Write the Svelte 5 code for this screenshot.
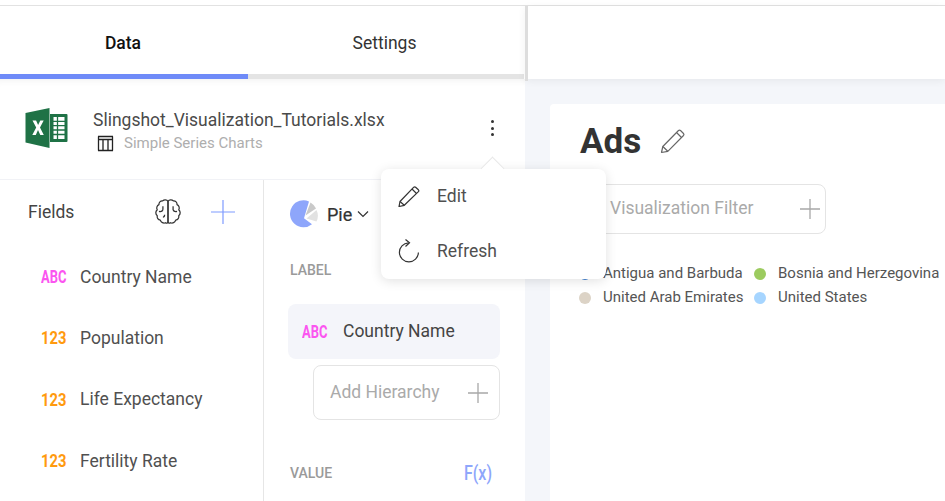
<script lang="ts">
  const fields = [
    { kind: 'ABC', name: 'Country Name' },
    { kind: '123', name: 'Population' },
    { kind: '123', name: 'Life Expectancy' },
    { kind: '123', name: 'Fertility Rate' }
  ];
  const legend = [
    { color: '#3f7fd0', name: 'Antigua and Barbuda' },
    { color: '#9ccb5f', name: 'Bosnia and Herzegovina' },
    { color: '#dcd3c6', name: 'United Arab Emirates' },
    { color: '#a6d5ff', name: 'United States' }
  ];
</script>

<div class="app">
  <aside class="left">
    <div class="tabs">
      <div class="tab active">Data</div>
      <div class="tab">Settings</div>
    </div>

    <div class="file">
      <svg class="excel" width="44" height="40" viewBox="0 0 44 40">
        <path d="M25 6h16.500a1 1 0 0 1 1 1v26a1 1 0 0 1-1 1H25z" fill="#1f7246"/>
        <path d="M0.500 5 24.500 0v40L0.500 34.500z" fill="#1f7246"/>
        <path d="M28.500 9h11v22h-11z" fill="#fff"/>
        <path d="M28 13.300h12M28 17.700h12M28 22h12M28 26.500h12M32.500 9v22" stroke="#1f7246" stroke-width="1.300" fill="none"/>
        <path d="M7.500 12.500h3.600l2 4.500 2.200-4.500h3.400l-3.700 7 3.800 7.500h-3.500l-2.300-4.900-2.200 4.900H7.300l3.900-7.500z" fill="#fff"/>
      </svg>
      <div class="file-text">
        <div class="file-name">Slingshot_Visualization_Tutorials.xlsx</div>
        <div class="file-sub">
          <svg width="17" height="17" viewBox="0 0 17 17" fill="none" stroke="#222" stroke-width="1.300">
            <path d="M1 1.500h15M1 4.500h15M1 15.500h15M1.500 1.500v14M6 4.500v11M11 4.500v11M15.500 1.500v14"/>
          </svg>
          <span>Simple Series Charts</span>
        </div>
      </div>
      <div class="dots"><i></i><i></i><i></i></div>
    </div>

    <div class="panels">
      <div class="fields">
        <div class="fields-head">
          <span class="fields-title">Fields</span>
          <svg class="brain" width="26" height="26" viewBox="1.500 1.500 23 23" fill="none" stroke="#333" stroke-width="1.100" stroke-linejoin="round">
            <path d="M13 3.500C12 2 9.500 1.800 8.300 3.200 6.300 3 4.800 4.500 5 6.500 3.200 7.300 2.500 9.500 3.500 11 1.800 12.500 1.800 15 3.500 16.300 3 18.300 4.300 20 6.200 20.200 6.800 22.300 9 23.300 10.800 22.500 11.800 23.300 13 22.800 13 21.500z"/>
            <path d="M13 3.500C14 2 16.500 1.800 17.700 3.200 19.700 3 21.200 4.500 21 6.500 22.800 7.300 23.500 9.500 22.500 11 24.200 12.500 24.200 15 22.500 16.300 23 18.300 21.700 20 19.800 20.200 19.200 22.300 17 23.300 15.200 22.500 14.200 23.300 13 22.800 13 21.500z"/>
            <path d="M5 12.500c2 .5 3 0 3.500-1.500M8.500 8v3M17.500 8v3c.5 1.500 1.500 2 3.500 1.500M8.500 17.500c1 0 1.500-.5 1.500-2"/>
          </svg>
          <svg class="plus" width="24" height="24" viewBox="0 0 24 24" stroke="#7f9bff" stroke-width="1.200"><path d="M12 0v24M0 12h24"/></svg>
        </div>
        {#each fields as f}
          <div class="field">
            <span class="kind" class:abc={f.kind === 'ABC'}>{f.kind}</span>
            <span>{f.name}</span>
          </div>
        {/each}
      </div>

      <div class="viz">
        <div class="chart-type">
          <svg width="29" height="28" viewBox="0 0 29 28">
            <path d="M15 18.300 20 1.500A13.500 13.500 0 1 0 23 24.300z" fill="#8ea6fb"/>
            <path d="M16.500 15.500 21.500 2.400A13 13 0 0 1 27 8.500z" fill="#c9c9c9"/>
            <path d="M17.500 18.500 27.500 10A13 13 0 0 1 27.500 21.500z" fill="#e2e2e2"/>
          </svg>
          <span class="pie-label">Pie</span>
          <svg width="12" height="8" viewBox="0 0 12 8" fill="none" stroke="#333" stroke-width="1.200"><path d="M1 1.500 6 6.500 11 1.500"/></svg>
        </div>
        <div class="section-label first">LABEL</div>
        <div class="pill">
          <span class="kind abc">ABC</span>
          <span>Country Name</span>
        </div>
        <div class="add-box hierarchy">
          <span>Add Hierarchy</span>
          <svg width="20" height="20" viewBox="0 0 20 20" stroke="#a8a8a8" stroke-width="1.300"><path d="M10 0v20M0 10h20"/></svg>
        </div>
        <div class="value-row">
          <div class="section-label">VALUE</div>
          <span class="fx">F(x)</span>
        </div>
      </div>
    </div>
  </aside>

  <main class="right">
    <div class="topbar"></div>
    <section class="card">
      <div class="title-row">
        <h1>Ads</h1>
        <svg width="26" height="26" viewBox="0 0 26 26" fill="none" stroke="#666" stroke-width="1.200" stroke-linejoin="round">
          <path d="M1.500 24.500 2.800 18.500 18.500 2.500a1.500 1.500 0 0 1 2 0l3 3a1.500 1.500 0 0 1 0 2L7.800 23.300z"/>
          <path d="M16.500 4.500l5 5M2.800 18.500l5 4.800"/>
        </svg>
      </div>
      <div class="add-box filter">
        <span>Visualization Filter</span>
        <svg width="20" height="20" viewBox="0 0 20 20" stroke="#a8a8a8" stroke-width="1.300"><path d="M10 0v20M0 10h20"/></svg>
      </div>
      <div class="legend">
        {#each legend as item}
          <div class="legend-item">
            <i style="background: {item.color}"></i>
            <span>{item.name}</span>
          </div>
        {/each}
      </div>
    </section>
  </main>

  <div class="menu">
    <div class="arrow"></div>
    <div class="menu-item">
      <svg width="22" height="22" viewBox="0 0 22 22" fill="none" stroke="#333" stroke-width="1.200" stroke-linejoin="round">
        <path d="M1 21.500 2 16.500 15.800 2.200a1.300 1.300 0 0 1 1.800 0l2.800 2.600a1.300 1.300 0 0 1 0 1.800L6.300 20.300z"/>
        <path d="M14 4l4.500 4.500M2 16.500l4.300 3.800"/>
      </svg>
      <span>Edit</span>
    </div>
    <div class="menu-item">
      <svg width="22" height="24" viewBox="0 0 22 24" fill="none" stroke="#333" stroke-width="1.200">
        <path d="M10.500 3.800A9.500 9.500 0 1 0 20.400 13.500"/>
        <path d="M7.500 0.500 11.500 3.800 7.500 7.500"/>
      </svg>
      <span>Refresh</span>
    </div>
  </div>
</div>

<style>
  :global(body) {
    margin: 0;
    background: #fff;
  }
  .app {
    position: relative;
    display: flex;
    width: 945px;
    height: 501px;
    padding-top: 5px;
    box-sizing: border-box;
    overflow: hidden;
    font-family: Roboto, sans-serif;
    color: #444;
    background: #f4f6fa;
  }
  .app::before {
    content: '';
    position: absolute;
    top: 0;
    left: 0;
    right: 0;
    height: 5px;
    background: #fff;
    border-bottom: 1px solid #e2e2e2;
    box-sizing: content-box;
  }
  .left {
    width: 525px;
    flex: none;
    display: flex;
    flex-direction: column;
    background: #fff;
    margin-top: 1px;
  }
  .tabs {
    display: flex;
    height: 73px;
    flex: none;
    box-sizing: border-box;
    border-bottom: 5px solid #e4e4e4;
    margin-right: 1px;
  }
  .tab {
    flex: 1;
    display: flex;
    justify-content: center;
    padding: 27px 3px 0 0;
    box-sizing: border-box;
    height: 73px;
    font-size: 17.500px;
    color: #333;
  }
  .tab.active {
    flex: none;
    width: 248px;
    padding-right: 2px;
    color: #111;
    font-weight: 500;
    border-bottom: 5px solid #6f8bf8;
  }
  .file {
    height: 101px;
    flex: none;
    display: flex;
    align-items: flex-start;
    box-sizing: border-box;
    padding: 29px 31px 0 25px;
    box-shadow: inset 0 8px 8px -8px rgba(0, 0, 0, 0.08);
    border-bottom: 1px solid #f1f2f6;
  }
  .file-name {
    font-size: 17.500px;
    line-height: 22px;
    color: #4a4a4a;
    margin-top: 1px;
  }
  .file-text {
    margin-left: 24px;
  }
  .file-sub {
    display: flex;
    align-items: center;
    gap: 10px;
    margin: 3px 0 0 4px;
    font-size: 15px;
    color: #aeaeae;
  }
  .dots {
    display: flex;
    flex-direction: column;
    gap: 3.500px;
    margin: 12px 0 0 auto;
  }
  .dots i {
    width: 3px;
    height: 3px;
    border-radius: 50%;
    background: #333;
  }
  .panels {
    display: flex;
    flex: 1;
  }
  .fields {
    width: 264px;
    flex: none;
    box-sizing: border-box;
    border-right: 1px solid #e6e6e6;
    padding: 19px 0 0 28px;
  }
  .fields-head {
    display: flex;
    align-items: center;
    height: 26px;
    margin-bottom: 21px;
  }
  .fields-title {
    font-size: 17.500px;
    width: 127px;
    color: #444;
  }
  .plus {
    margin-left: 30px;
  }
  .field {
    display: flex;
    align-items: center;
    height: 61.300px;
    font-size: 17.500px;
    color: #505050;
    padding-left: 13px;
    gap: 14px;
  }
  .kind {
    display: inline-block;
    width: 25px;
    font-size: 18px;
    font-weight: 700;
    color: #ff9a0f;
    white-space: nowrap;
    transform: scaleX(0.82);
    transform-origin: left center;
  }
  .kind.abc {
    color: #fb55f0;
    transform: scaleX(0.72);
  }
  .viz {
    flex: 1;
    padding: 20px 25px 0 24px;
    box-sizing: border-box;
  }
  .chart-type {
    display: flex;
    align-items: center;
    height: 28px;
    gap: 5px;
    margin-left: 1px;
  }
  .pie-label {
    font-size: 18px;
    color: #333;
    margin-left: 4px;
    -webkit-text-stroke: 0.2px #333;
  }
  .section-label {
    font-size: 14px;
    font-weight: 500;
    color: #9a9a9a;
    margin-left: 2px;
  }
  .section-label.first {
    margin-top: 34px;
    height: 42px;
  }
  .pill {
    display: flex;
    align-items: center;
    gap: 16px;
    height: 55px;
    border-radius: 8px;
    background: #f4f5fa;
    font-size: 17.500px;
    color: #444;
    padding: 0 0 1px 14px;
    box-sizing: border-box;
  }
  .add-box {
    display: flex;
    align-items: center;
    justify-content: space-between;
    box-sizing: border-box;
    border: 1px solid #e4e4e4;
    border-radius: 8px;
    font-size: 17.500px;
    color: #aaa;
    background: #fff;
  }
  .hierarchy {
    height: 55px;
    margin: 6px 0 0 25px;
    padding: 0 11px 0 16px;
  }
  .hierarchy span {
    margin-bottom: 2px;
  }
  .value-row {
    display: flex;
    justify-content: space-between;
    align-items: center;
    margin-top: 41px;
    padding-right: 8px;
  }
  .fx {
    display: inline-block;
    width: 28px;
    font-size: 20px;
    font-weight: 500;
    color: #8ea6fb;
    white-space: nowrap;
    transform: scaleX(0.8);
    transform-origin: left center;
  }
  .right {
    flex: 1;
    min-width: 0;
    display: flex;
    flex-direction: column;
    padding-top: 1px;
  }
  .topbar {
    position: relative;
    height: 73px;
    flex: none;
    background: #fff;
    border-left: 3px solid #ddd;
    box-sizing: border-box;
    box-shadow: 0 2px 8px rgba(0, 0, 0, 0.06);
  }
  .topbar::before {
    content: '';
    position: absolute;
    left: -3px;
    bottom: -2px;
    width: 3px;
    height: 2px;
    background: #ddd;
  }
  .card {
    flex: 1;
    margin: 25px 0 0 25px;
    background: #fff;
    padding: 15px 0 0 30px;
    border-top-left-radius: 4px;
  }
  .title-row {
    display: flex;
    align-items: center;
    gap: 19px;
    height: 44px;
  }
  h1 {
    margin: 0;
    font-size: 35px;
    font-weight: 700;
    color: #333;
  }
  .filter {
    width: 246px;
    height: 50px;
    margin-top: 21px;
    padding: 0 5px 3px 29px;
  }
  .filter svg {
    margin-top: 3px;
  }
  .legend {
    display: grid;
    grid-template-columns: 175px auto;
    justify-content: start;
    margin-top: 27px;
  }
  .legend-item {
    display: flex;
    align-items: center;
    height: 24px;
    font-size: 15px;
    color: #555;
    gap: 12px;
  }
  .legend-item i {
    width: 12px;
    height: 12px;
    border-radius: 50%;
    flex: none;
    margin: 2px 0 0 -1px;
  }
  .menu {
    position: absolute;
    z-index: 1;
    left: 381px;
    top: 169px;
    width: 225px;
    height: 110px;
    background: #fff;
    border-radius: 8px;
    box-shadow: 0 2px 12px rgba(0, 0, 0, 0.12);
  }
  .arrow {
    position: absolute;
    left: 103px;
    top: -9px;
    width: 17px;
    height: 17px;
    background: #fff;
    box-sizing: border-box;
    border-top: 1px solid #e8e8e8;
    border-left: 1px solid #e8e8e8;
    transform: rotate(45deg);
  }
  .menu-item {
    display: flex;
    align-items: center;
    height: 55px;
    padding-left: 17px;
    gap: 17px;
    font-size: 17.500px;
    color: #505050;
    position: relative;
    top: -1px;
  }
</style>
